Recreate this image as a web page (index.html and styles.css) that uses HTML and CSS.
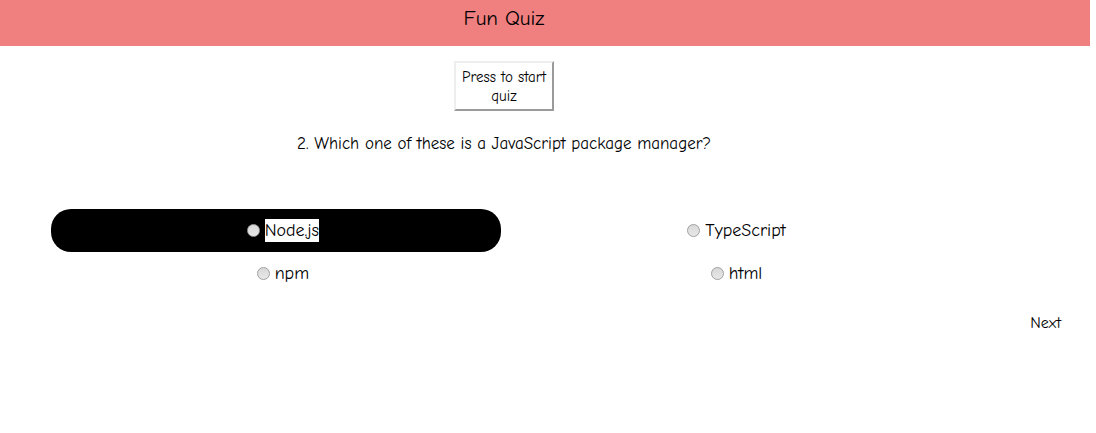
FILE: index.html
```html
<!DOCTYPE html>
<html lang="en">
<head>
<meta charset="utf-8">
<title>Fun Quiz</title>
<link rel="stylesheet" href="styles.css">
</head>
<body>
<header class="banner"><h1 class="title">Fun Quiz</h1></header>
<main class="quiz">
<button class="start" type="button">Press to start quiz</button>
<form class="form">
<fieldset class="question">
<legend class="prompt">2. Which one of these is a JavaScript package manager?</legend>
<div class="answers">
<label class="answer answer-active"><input class="radio" type="radio" name="answer"><span class="text">Node.js</span></label>
<label class="answer"><input class="radio" type="radio" name="answer"><span class="text">TypeScript</span></label>
<label class="answer"><input class="radio" type="radio" name="answer"><span class="text">npm</span></label>
<label class="answer"><input class="radio" type="radio" name="answer"><span class="text">html</span></label>
</div>
</fieldset>
<button class="next" type="button">Next</button>
</form>
</main>
</body>
</html>
```
FILE: styles.css
```css
* { box-sizing: border-box; }
body {
  margin: 0;
  background: #fff;
  color: #000;
  font-family: "Comic Sans MS", "Comic Neue", Lato, sans-serif;
  font-size: 16px;
  line-height: 23px;
}
.banner {
  margin-right: 6px;
  padding: 4px 82px 14px 0;
  background: #f08080;
  text-align: center;
}
.title { margin: 0; font-size: 21px; font-weight: 400; line-height: 28px; }
.quiz { display: flex; flex-direction: column; padding: 15px 30px 0 51px; }
.start {
  align-self: center;
  width: 100px;
  margin-right: 109px;
  padding: 5px 0 3px;
  border: 2px outset #eee;
  background: #fff;
  color: inherit;
  font: inherit;
  font-size: 15px;
  line-height: 19px;
}
.form { display: flex; flex-direction: column; padding-top: 21px; }
.question { margin: 0; padding: 0; border: 0; min-width: 0; }
.prompt { width: 100%; padding: 0 109px 0 0; text-align: center; font-size: 17px; }
.answers { display: grid; grid-template-columns: 1fr 1fr; column-gap: 4px; width: 89%; padding-top: 54px; }
.answer { display: flex; align-items: center; justify-content: center; gap: 5px; padding: 10px 0 10px 14px; border-radius: 20px; }
.answer-active { background: #000; }
.answer-active .text { background: #fff; }
.radio {
  appearance: none;
  width: 13px;
  height: 13px;
  margin: 0;
  border: 1px solid #a0a0a0;
  border-radius: 50%;
  background: linear-gradient(#d8d8d8, #e8e8e8);
}
.text { font-size: 18px; }
.next { align-self: flex-end; margin-top: 17px; padding: 0 5px; border: 0; background: none; color: inherit; font: inherit; font-size: 16px; }
```
